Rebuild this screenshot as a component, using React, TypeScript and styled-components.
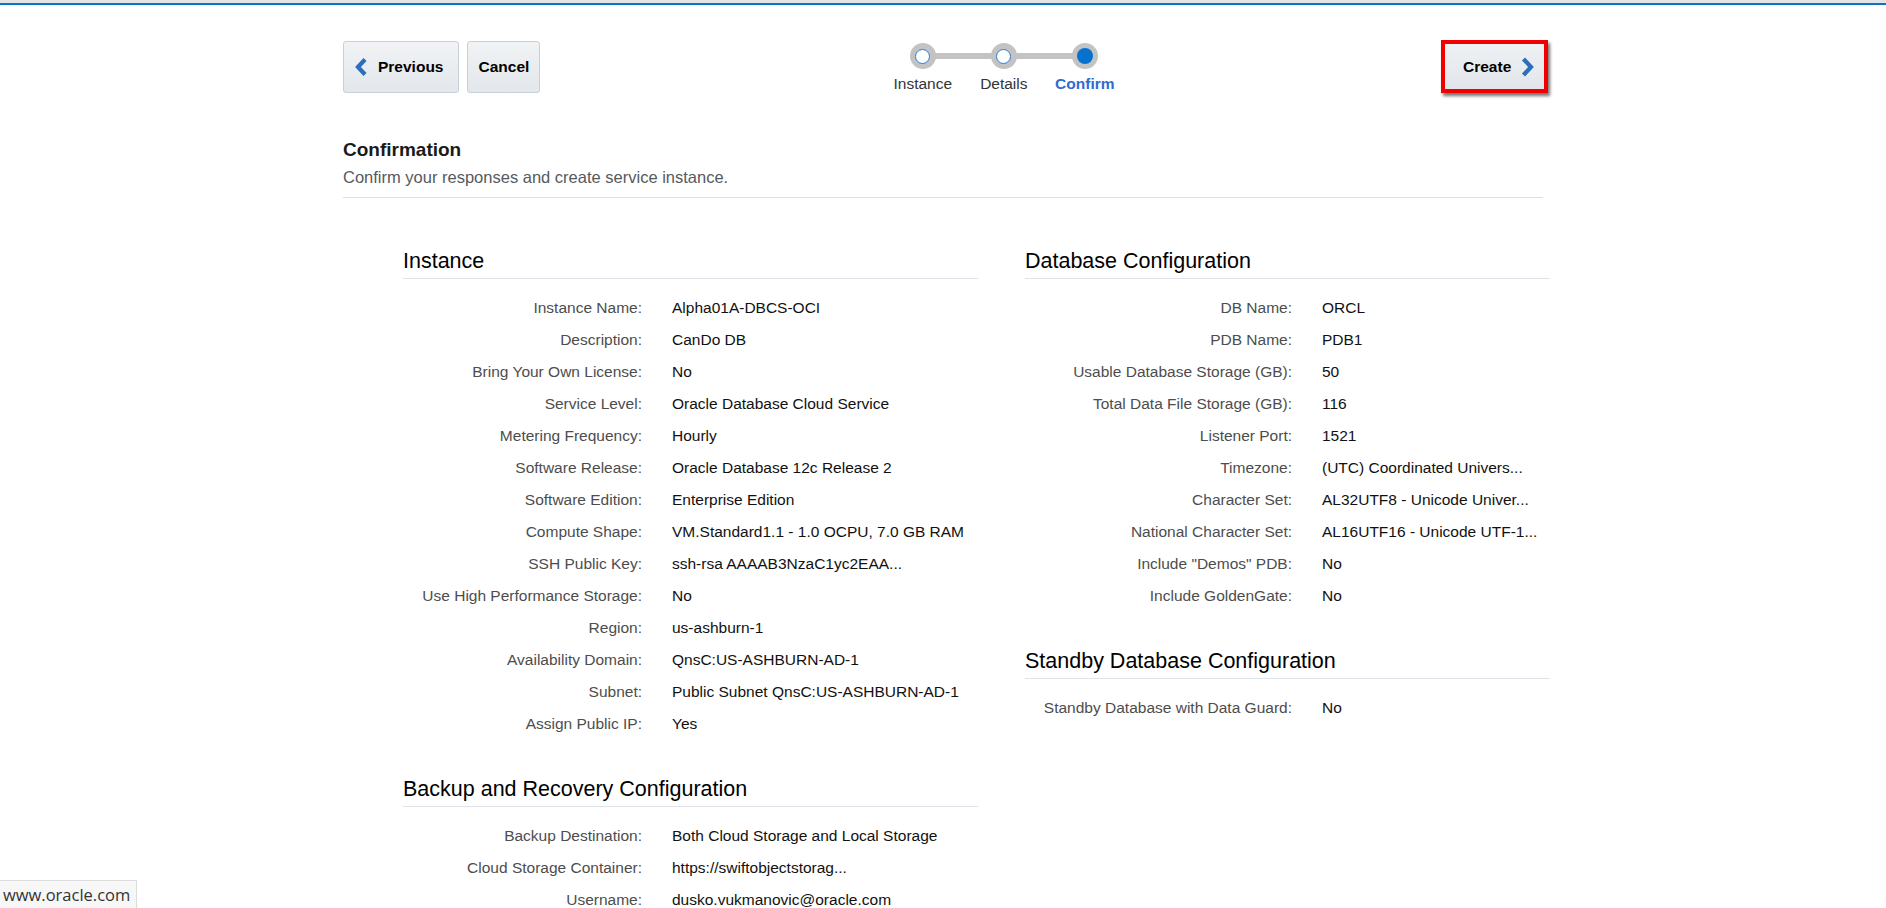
import React from "react";
import styled, { createGlobalStyle } from "styled-components";

const GlobalStyle = createGlobalStyle`
  html, body {
    margin: 0;
    padding: 0;
    overflow: hidden;
    background: #ffffff;
    font-family: "Liberation Sans", Arial, sans-serif;
  }
  * { box-sizing: border-box; }
`;

const TopBar = styled.div`
  height: 5px;
  background: #e2e4e6;
  border-bottom: 2px solid #0b74c6;
`;

const Page = styled.div`
  width: 1200px;
  margin: 0 auto;
`;

const Toolbar = styled.div`
  display: flex;
  align-items: flex-start;
  margin-top: 36px;
  height: 52px;
`;

const ButtonGroup = styled.div`
  display: flex;
  gap: 8px;
`;

const Button = styled.button<{ $padL: number; $padR: number }>`
  display: flex;
  align-items: center;
  gap: 9px;
  height: 52px;
  padding: 0 ${(p) => p.$padR}px 0 ${(p) => p.$padL}px;
  background: linear-gradient(#f1f3f5, #e3e7eb);
  border: 1px solid #c7d0d8;
  border-radius: 3px;
  font-family: "Liberation Sans", Arial, sans-serif;
  font-weight: bold;
  font-size: 15.5px;
  color: #000;
  cursor: pointer;
`;

const CreateButton = styled.button`
  display: flex;
  align-items: center;
  gap: 10px;
  height: 53px;
  width: 107px;
  margin-left: auto;
  margin-right: -5px;
  margin-top: -1px;
  padding: 0 0 0 18px;
  background: linear-gradient(#eef1f4, #e2e6ea);
  border: 4px solid #f00000;
  border-radius: 0;
  box-shadow: 2px 3px 3px rgba(0, 0, 0, 0.55);
  font-family: "Liberation Sans", Arial, sans-serif;
  font-weight: bold;
  font-size: 15.5px;
  color: #000;
  cursor: pointer;
`;

const Stepper = styled.div`
  display: grid;
  grid-template-columns: repeat(3, 81px);
  margin-left: 342px;
  padding-top: 2px;
`;

const Step = styled.div<{ $first?: boolean }>`
  position: relative;
  display: flex;
  flex-direction: column;
  align-items: center;
  gap: 6px;
  &::before {
    content: "";
    display: ${(p) => (p.$first ? "none" : "block")};
    position: absolute;
    top: 10px;
    left: -40px;
    width: 81px;
    height: 6px;
    background: #c3c3c3;
  }
`;

const Dot = styled.div<{ $active?: boolean }>`
  position: relative;
  z-index: 1;
  width: 26px;
  height: 26px;
  border-radius: 50%;
  background: #c3c3c3;
  display: flex;
  align-items: center;
  justify-content: center;
  &::after {
    content: "";
    width: ${(p) => (p.$active ? 16 : 15)}px;
    height: ${(p) => (p.$active ? 16 : 15)}px;
    border-radius: 50%;
    box-sizing: border-box;
    background: ${(p) => (p.$active ? "#0572ce" : "#ffffff")};
    border: ${(p) => (p.$active ? "none" : "1.5px solid #2a7fd4")};
  }
`;

const StepLabel = styled.span<{ $active?: boolean }>`
  font-size: 15.5px;
  line-height: 18px;
  white-space: nowrap;
  color: ${(p) => (p.$active ? "#2f6bd3" : "#333333")};
  font-weight: ${(p) => (p.$active ? "bold" : "normal")};
`;

const PageHeader = styled.div`
  margin-top: 46px;
  padding-bottom: 10px;
  border-bottom: 1px solid #d9e1e7;
`;

const Title = styled.h1`
  margin: 0;
  font-size: 19px;
  line-height: 22px;
  font-weight: bold;
  color: #1a1a1a;
`;

const Subtitle = styled.p`
  margin: 6px 0 0;
  font-size: 16.5px;
  line-height: 20px;
  color: #555a60;
`;

const Columns = styled.div`
  display: grid;
  grid-template-columns: 575px 525px;
  column-gap: 47px;
  padding-left: 60px;
  margin-top: 50px;
`;

const Column = styled.div`
  display: flex;
  flex-direction: column;
  gap: 36px;
`;

const Section = styled.section``;

const SectionTitle = styled.h2`
  margin: 0 0 13px;
  padding-bottom: 4px;
  border-bottom: 1px solid #dde3e8;
  font-size: 21.5px;
  line-height: 26px;
  font-weight: normal;
  color: #000;
`;

const Row = styled.div<{ $labelWidth: number }>`
  display: grid;
  grid-template-columns: ${(p) => p.$labelWidth}px 1fr;
  column-gap: 30px;
  height: 32px;
  align-items: center;
  font-size: 15.5px;
`;

const Label = styled.span`
  text-align: right;
  color: #4d4d4d;
  white-space: nowrap;
`;

const Value = styled.span`
  color: #111;
  white-space: nowrap;
`;

const StatusBar = styled.div`
  position: fixed;
  left: 0;
  bottom: 0;
  width: 137px;
  height: 28px;
  padding: 2px 0 0 3px;
  background: #f7f7f7;
  border-top: 1px solid #dcdcdc;
  border-right: 1px solid #dcdcdc;
  font-family: "Open Sans", "Noto Sans", sans-serif;
  font-size: 16.5px;
  line-height: 24px;
  color: #333;
  white-space: nowrap;
`;

const ChevronLeft = () => (
  <svg width="15" height="18" viewBox="0 0 15 18">
    <polyline
      points="11,1.5 4,9 11,16.5"
      fill="none"
      stroke="#2a6ebc"
      strokeWidth="4.2"
      strokeLinejoin="miter"
    />
  </svg>
);

const ChevronRight = () => (
  <svg width="13" height="20" viewBox="0 0 13 20">
    <polyline
      points="2.5,2 10,10 2.5,18"
      fill="none"
      stroke="#2a6ebc"
      strokeWidth="4.2"
      strokeLinejoin="miter"
    />
  </svg>
);

type Pair = [string, string];

const instanceRows: Pair[] = [
  ["Instance Name:", "Alpha01A-DBCS-OCI"],
  ["Description:", "CanDo DB"],
  ["Bring Your Own License:", "No"],
  ["Service Level:", "Oracle Database Cloud Service"],
  ["Metering Frequency:", "Hourly"],
  ["Software Release:", "Oracle Database 12c Release 2"],
  ["Software Edition:", "Enterprise Edition"],
  ["Compute Shape:", "VM.Standard1.1 - 1.0 OCPU, 7.0 GB RAM"],
  ["SSH Public Key:", "ssh-rsa AAAAB3NzaC1yc2EAA..."],
  ["Use High Performance Storage:", "No"],
  ["Region:", "us-ashburn-1"],
  ["Availability Domain:", "QnsC:US-ASHBURN-AD-1"],
  ["Subnet:", "Public Subnet QnsC:US-ASHBURN-AD-1"],
  ["Assign Public IP:", "Yes"],
];

const backupRows: Pair[] = [
  ["Backup Destination:", "Both Cloud Storage and Local Storage"],
  ["Cloud Storage Container:", "https://swiftobjectstorag..."],
  ["Username:", "dusko.vukmanovic@oracle.com"],
];

const dbRows: Pair[] = [
  ["DB Name:", "ORCL"],
  ["PDB Name:", "PDB1"],
  ["Usable Database Storage (GB):", "50"],
  ["Total Data File Storage (GB):", "116"],
  ["Listener Port:", "1521"],
  ["Timezone:", "(UTC) Coordinated Univers..."],
  ["Character Set:", "AL32UTF8 - Unicode Univer..."],
  ["National Character Set:", "AL16UTF16 - Unicode UTF-1..."],
  ['Include "Demos" PDB:', "No"],
  ["Include GoldenGate:", "No"],
];

const standbyRows: Pair[] = [["Standby Database with Data Guard:", "No"]];

const InfoSection = ({
  title,
  rows,
  labelWidth,
}: {
  title: string;
  rows: Pair[];
  labelWidth: number;
}) => (
  <Section>
    <SectionTitle>{title}</SectionTitle>
    {rows.map(([l, v]) => (
      <Row key={l} $labelWidth={labelWidth}>
        <Label>{l}</Label>
        <Value>{v}</Value>
      </Row>
    ))}
  </Section>
);

export default function App() {
  return (
    <>
      <GlobalStyle />
      <TopBar />
      <Page>
        <Toolbar>
          <ButtonGroup>
            <Button $padL={10} $padR={15}>
              <ChevronLeft />
              Previous
            </Button>
            <Button $padL={10} $padR={10}>
              Cancel
            </Button>
          </ButtonGroup>
          <Stepper>
            <Step $first>
              <Dot />
              <StepLabel>Instance</StepLabel>
            </Step>
            <Step>
              <Dot />
              <StepLabel>Details</StepLabel>
            </Step>
            <Step>
              <Dot $active />
              <StepLabel $active>Confirm</StepLabel>
            </Step>
          </Stepper>
          <CreateButton>
            Create
            <ChevronRight />
          </CreateButton>
        </Toolbar>
        <PageHeader>
          <Title>Confirmation</Title>
          <Subtitle>Confirm your responses and create service instance.</Subtitle>
        </PageHeader>
        <Columns>
          <Column>
            <InfoSection title="Instance" rows={instanceRows} labelWidth={239} />
            <InfoSection
              title="Backup and Recovery Configuration"
              rows={backupRows}
              labelWidth={239}
            />
          </Column>
          <Column>
            <InfoSection title="Database Configuration" rows={dbRows} labelWidth={267} />
            <InfoSection
              title="Standby Database Configuration"
              rows={standbyRows}
              labelWidth={267}
            />
          </Column>
        </Columns>
      </Page>
      <StatusBar>www.oracle.com</StatusBar>
    </>
  );
}
